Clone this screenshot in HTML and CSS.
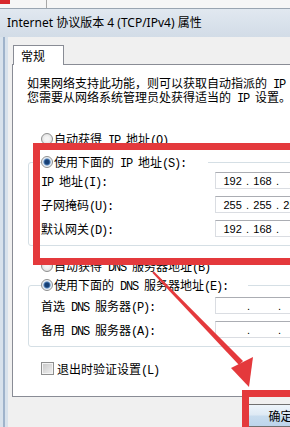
FILE: index.html
```html
<!DOCTYPE html>
<html lang="zh-CN">
<head>
  <meta charset="UTF-8" />
  <meta name="viewport" content="width=device-width, initial-scale=1" />
  <title>Internet 协议版本 4 (TCP/IPv4) 属性</title>
  <link rel="stylesheet" href="styles.css">
</head>
<body>
  <div class="screen">
    <div class="backstrip"><span class="redmark"></span><span class="sep"></span></div>

    <div class="window">
      <div class="titlebar">Internet 协议版本 4 (TCP/IPv4) 属性</div>
      <div class="client">
        <div class="tabs"><div class="tab">常规</div></div>
        <div class="pane">
          <p class="intro">如果网络支持此功能，则可以获取自动指派的<span class="en"> IP </span>设置。否则，<br>您需要从网络系统管理员处获得适当的<span class="en"> IP </span>设置。</p>

          <div class="opt first"><span class="radio"></span>自动获得<span class="en"> IP </span>地址<span class="en">(O)</span></div>

          <fieldset class="group">
            <legend class="ip-legend"><span class="opt"><span class="radio on"></span>使用下面的<span class="en"> IP </span>地址<span class="en">(S):</span></span></legend>
            <div class="rows">
              <span><span class="en">IP </span>地址<span class="en">(I):</span></span>
              <div class="ipbox"><span class="oct">192</span><span class="dot">.</span><span class="oct">168</span><span class="dot">.</span><span class="oct">1</span><span class="dot">.</span><span class="oct">100</span></div>
              <span>子网掩码<span class="en">(U):</span></span>
              <div class="ipbox"><span class="oct">255</span><span class="dot">.</span><span class="oct">255</span><span class="dot">.</span><span class="oct">255</span><span class="dot">.</span><span class="oct">0</span></div>
              <span>默认网关<span class="en">(D):</span></span>
              <div class="ipbox"><span class="oct">192</span><span class="dot">.</span><span class="oct">168</span><span class="dot">.</span><span class="oct">1</span><span class="dot">.</span><span class="oct">1</span></div>
            </div>
          </fieldset>

          <div class="opt auto-dns"><span class="radio"></span>自动获得<span class="en"> DNS </span>服务器地址<span class="en">(B)</span></div>

          <fieldset class="group dns">
            <legend class="dns-legend"><span class="opt"><span class="radio on"></span>使用下面的<span class="en"> DNS </span>服务器地址<span class="en">(E):</span></span></legend>
            <div class="rows">
              <span>首选<span class="en"> DNS </span>服务器<span class="en">(P):</span></span>
              <div class="ipbox"><span class="oct"></span><span class="dot">.</span><span class="oct"></span><span class="dot">.</span><span class="oct"></span><span class="dot">.</span></div>
              <span>备用<span class="en"> DNS </span>服务器<span class="en">(A):</span></span>
              <div class="ipbox"><span class="oct"></span><span class="dot">.</span><span class="oct"></span><span class="dot">.</span><span class="oct"></span><span class="dot">.</span></div>
            </div>
          </fieldset>

          <div class="opt check"><span class="box"></span>退出时验证设置<span class="en">(L)</span></div>
        </div>
        <div class="buttons"><button class="btn">确定</button></div>
      </div>
    </div>

    <!-- annotations drawn over the dialog -->
    <div class="mark mark-ip"></div>
    <div class="mark mark-ok"></div>
    <svg class="arrow" width="290" height="427" viewBox="0 0 290 427">
      <polygon points="153.7,271.3 152.3,272.7 239,365 243,361" fill="#e4393c" />
      <polygon points="231,368 253,357 249,387" fill="#e4393c" />
    </svg>
  </div>
</body>
</html>
```

FILE: styles.css
```css
body {
  margin: 0;
  background: #f0f0f0;
  font: 12px "Noto Sans CJK SC", sans-serif;
  color: #000;
}
.screen {
  position: relative;
  width: 290px;
  height: 427px;
  overflow: hidden;
}
.backstrip {
  display: flex;
  height: 8px;
  background: #f6f6f6;
  border-bottom: 1px solid #9aa5b1;
}
.redmark {
  width: 10px;
  height: 4px;
  background: #d8282c;
}
.sep {
  width: 1px;
  height: 8px;
  margin-left: 36px;
  background: #a7a7a7;
}
.window {
  background: linear-gradient(to right, #d8e2ec 0 3px, #9fb3cb 3px 5px, #d8e2ec 5px 8px);
  height: 418px;
}
.titlebar {
  height: 28px;
  line-height: 28px;
  padding-left: 7px;
  background: linear-gradient(#e1e8f0, #d2dce7);
  font-family: "Noto Sans", "Noto Sans CJK SC", sans-serif;
  white-space: nowrap;
}
.client {
  margin-left: 8px;
  width: 440px;
  height: 382px;
  padding: 8px 0 0 4px;
  background: #f0f0f0;
}
.tabs {
  display: flex;
  height: 19px;
}
.tab {
  position: relative;
  z-index: 1;
  box-sizing: border-box;
  width: 51px;
  height: 20px;
  margin-left: 1px;
  padding-left: 7px;
  line-height: 19px;
  border: 1px solid #898c95;
  border-bottom: 0;
  background: #fff;
}
.pane {
  border: 1px solid #898c95;
  background: #fff;
  padding-bottom: 20px;
}
.intro {
  height: 24px;
  margin: 12px 0 0 14px;
  line-height: 12px;
  white-space: nowrap;
}
.en {
  font-family: "Liberation Mono", monospace;
  letter-spacing: -1.2px;
}
.opt {
  display: block;
  height: 14px;
  line-height: 14px;
  white-space: nowrap;
}
.pane > .opt {
  margin-left: 28px;
}
.first {
  margin-top: 31px;
}
.auto-dns {
  margin-top: 13px;
}
.check {
  margin-top: 15px;
}
.radio {
  display: inline-block;
  vertical-align: top;
  box-sizing: border-box;
  width: 12px;
  height: 12px;
  margin: 1px 1px 0 0;
  border: 1px solid #8e8f8f;
  border-radius: 50%;
  background: radial-gradient(circle, #f4f4f4 0 2px, #dcdcdc 6px);
}
.radio.on {
  background: radial-gradient(circle, #163f74 0 2px, #4f7fb8 3px, #dfe8f2 4px, #fff 6px);
}
.box {
  display: inline-block;
  vertical-align: top;
  box-sizing: border-box;
  width: 13px;
  height: 13px;
  margin-right: 3px;
  border: 1px solid #8e8f8f;
  background: linear-gradient(135deg, #c6c6c6, #f2f2f2);
  box-shadow: inset 0 0 0 1px #f4f4f4;
}
.group {
  width: 300px;
  min-width: 0;
  margin: 9px 0 0 15px;
  padding: 3px 12px 8px;
  border: 1px solid #d5dfe5;
  border-radius: 3px;
}
.group legend {
  padding: 0;
}
.ip-legend {
  width: 167px;
}
.dns-legend {
  width: 207px;
}
.dns {
  margin-top: 5px;
  padding-top: 5px;
}
.rows {
  display: grid;
  grid-template-columns: 174px 120px;
  grid-auto-rows: 17px;
  row-gap: 7px;
  align-items: center;
  white-space: nowrap;
}
.ipbox {
  display: flex;
  align-items: center;
  box-sizing: border-box;
  height: 17px;
  padding-left: 5px;
  border: 1px solid #dadde2;
  border-top-color: #abadb3;
  font: 11px "Liberation Sans", sans-serif;
}
.oct {
  width: 24px;
  text-align: center;
}
.dot {
  width: 7px;
  text-align: center;
}
.buttons {
  padding: 7px 0 0 231px;
}
.btn {
  width: 75px;
  height: 23px;
  padding: 0;
  border: 1px solid #707070;
  border-radius: 3px;
  background: linear-gradient(#eef5fb, #dde9f4 48%, #c8dcee 52%, #bdd5ec);
  font: 12px "Noto Sans CJK SC", sans-serif;
  color: #000;
}
.mark {
  position: absolute;
  box-sizing: border-box;
  border: 7px solid #e4393c;
}
.mark-ip {
  left: 33px;
  top: 143px;
  width: 280px;
  height: 122px;
}
.mark-ok {
  left: 242px;
  top: 390px;
  width: 70px;
  height: 60px;
}
.arrow {
  position: absolute;
  left: 0;
  top: 0;
}
```
